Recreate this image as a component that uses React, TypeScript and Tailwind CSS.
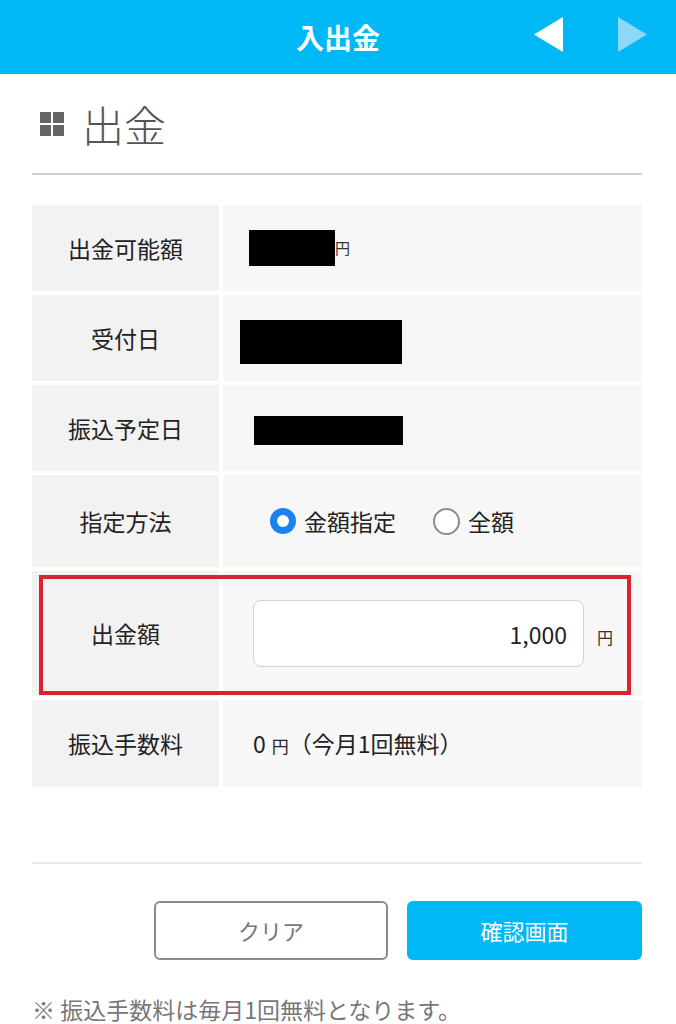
import * as React from "react";

const font = { fontFamily: '"Noto Sans CJK JP", "Noto Sans", sans-serif' };

function Redacted({ className }: { className: string }) {
  return <div className={`bg-black ${className}`} />;
}

function Radio({ checked, label }: { checked: boolean; label: string }) {
  return (
    <label className="flex items-center gap-[8px]">
      {checked ? (
        <span className="flex h-[26px] w-[26px] items-center justify-center rounded-full bg-[#1a82f0]">
          <span className="h-[12px] w-[12px] rounded-full bg-white" />
        </span>
      ) : (
        <span className="h-[27px] w-[27px] rounded-full border-2 border-[#8a8a8a] bg-white" />
      )}
      <span className="text-[23px] text-[#222]">{label}</span>
    </label>
  );
}

function Row({ label, h, children }: { label: string; h: string; children: React.ReactNode }) {
  return (
    <div className={`grid grid-cols-[187px_1fr] gap-x-[4px] ${h}`}>
      <div className="flex items-center justify-center bg-[#f2f2f2] text-[23px] text-[#222]">{label}</div>
      <div className="flex items-center bg-[#f7f7f7]">{children}</div>
    </div>
  );
}

export default function App() {
  const [mode, setMode] = React.useState<"amount" | "all">("amount");

  return (
    <div className="min-h-[1024px] bg-white" style={font}>
      <header className="relative flex h-[74px] items-center justify-center bg-[#00b8f6]">
        <h1 className="text-[28px] font-bold text-white">入出金</h1>
        <div className="absolute right-[29px] top-[17px] flex gap-[55px]">
          <svg width="29" height="35" viewBox="0 0 29 35">
            <polygon points="29,0 29,35 0,17.5" fill="#ffffff" />
          </svg>
          <svg width="29" height="35" viewBox="0 0 29 35">
            <polygon points="0,0 0,35 29,17.5" fill="#8dd8f8" />
          </svg>
        </div>
      </header>

      <main className="pl-[32px] pr-[34px]">
        <div className="flex h-[99px] items-center gap-[18px] pl-[8px]">
          <div className="grid grid-cols-2 gap-[2px]">
            <span className="h-[11px] w-[11px] bg-[#666]" />
            <span className="h-[11px] w-[11px] bg-[#666]" />
            <span className="h-[11px] w-[11px] bg-[#666]" />
            <span className="h-[11px] w-[11px] bg-[#666]" />
          </div>
          <h2 className="text-[42px] font-light text-[#555]">出金</h2>
        </div>
        <hr className="border-t-2 border-[#cfcfcf]" />

        <div className="mt-[30px] flex flex-col gap-[4px]">
          <Row label="出金可能額" h="h-[86px]">
            <div className="flex items-center pl-[26px]">
              <Redacted className="h-[36px] w-[86px]" />
              <span className="text-[15px] text-[#333]">円</span>
            </div>
          </Row>
          <Row label="受付日" h="h-[86px]">
            <Redacted className="ml-[17px] mt-[8px] h-[44px] w-[162px]" />
          </Row>
          <Row label="振込予定日" h="h-[86px]">
            <Redacted className="ml-[31px] mt-[4px] h-[29px] w-[149px]" />
          </Row>
          <Row label="指定方法" h="h-[92px]">
            <div className="flex items-center gap-[37px] pl-[47px]">
              <span onClick={() => setMode("amount")}>
                <Radio checked={mode === "amount"} label="金額指定" />
              </span>
              <span onClick={() => setMode("all")}>
                <Radio checked={mode === "all"} label="全額" />
              </span>
            </div>
          </Row>
          <div className="relative">
            <Row label="出金額" h="h-[125px]">
              <div className="flex items-center pl-[30px]">
                <input
                  className="h-[67px] w-[331px] rounded-[8px] border border-[#d2d2d2] bg-white pr-[16px] text-right text-[23px] text-[#222] outline-none"
                  defaultValue="1,000"
                />
                <span className="ml-[13px] mt-[6px] text-[16px] text-[#333]">円</span>
              </div>
            </Row>
            <div className="pointer-events-none absolute left-[7px] right-[11px] top-[4px] bottom-[1px] border-4 border-[#db2330]" />
          </div>
          <Row label="振込手数料" h="h-[87px]">
            <p className="pl-[30px] text-[23px] text-[#222]">
              0<span className="ml-[6px] text-[17px]">円</span>（今月1回無料）
            </p>
          </Row>
        </div>

        <hr className="mt-[75px] border-t-2 border-[#e8e8e8]" />

        <div className="mt-[37px] flex justify-end gap-[19px]">
          <button className="h-[59px] w-[234px] rounded-[6px] border-2 border-[#8c8c8c] bg-white text-[22px] text-[#777]">
            クリア
          </button>
          <button className="h-[59px] w-[235px] rounded-[6px] bg-[#00b8f6] text-[22px] text-white">確認画面</button>
        </div>

        <p className="mt-[38px] text-[23px] leading-none text-[#777]">※ 振込手数料は毎月1回無料となります。</p>
      </main>
    </div>
  );
}
